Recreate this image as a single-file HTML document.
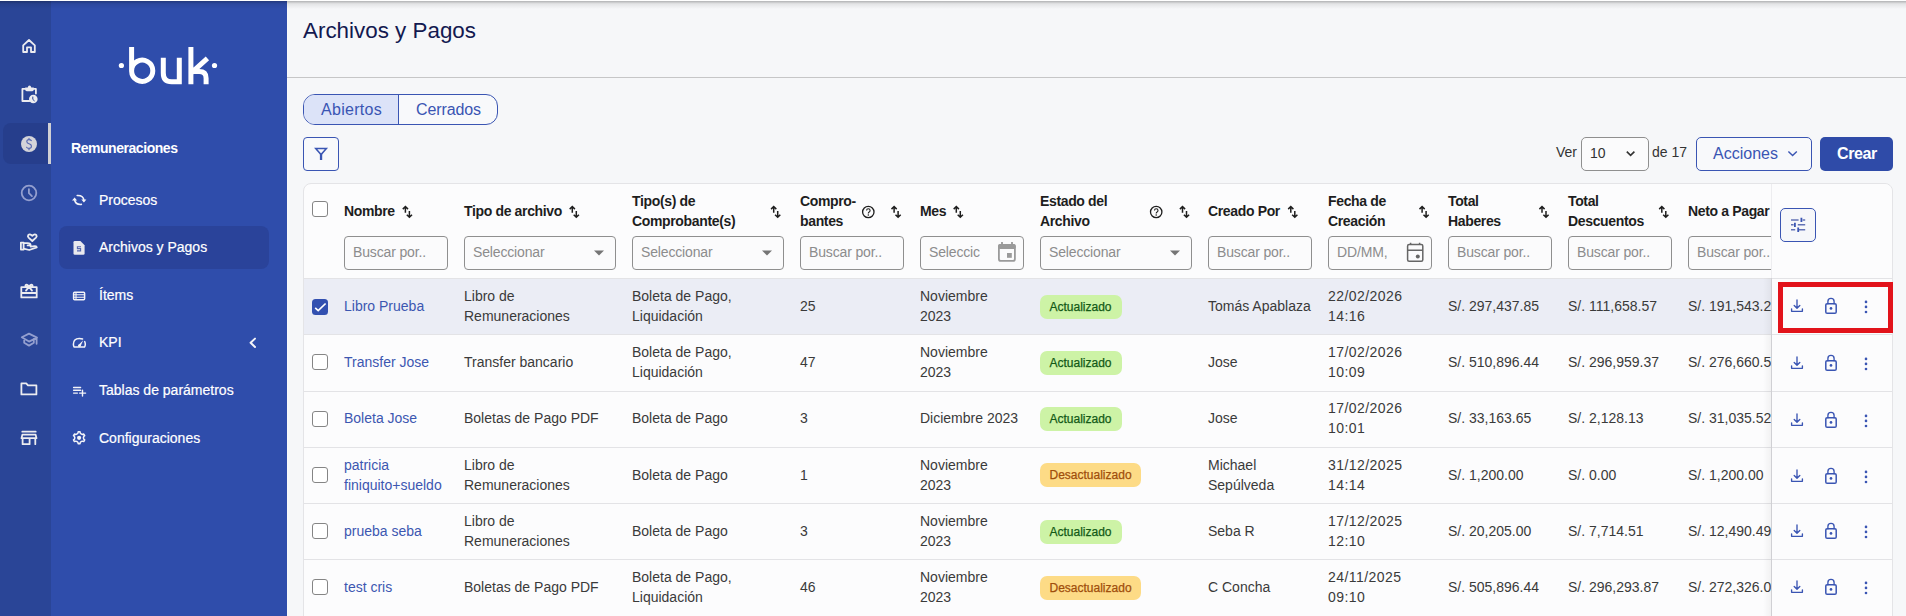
<!DOCTYPE html>
<html><head><meta charset="utf-8">
<style>
*{box-sizing:border-box;margin:0;padding:0}
html,body{width:1906px;height:616px;overflow:hidden;background:#fff;font-family:"Liberation Sans",sans-serif;}
.abs{position:absolute}
#rail{position:absolute;left:0;top:0;width:51px;height:616px;background:#2A4597}
#side{position:absolute;left:51px;top:0;width:236px;height:616px;background:#2F4DAB}
#main{position:absolute;left:287px;top:0;width:1619px;height:616px;background:#F6F7F9;border-left:1px solid #F9F9FA}
#topshadow{position:absolute;left:0;top:1px;width:1906px;height:8px;background:linear-gradient(rgba(0,0,0,.28),rgba(0,0,0,.08) 35%,rgba(0,0,0,0));pointer-events:none;z-index:50}
.ri{position:absolute;left:19px;width:20px;height:20px}
.sb-t{position:absolute;color:#fff;font-size:14px;white-space:nowrap;-webkit-text-stroke:0.2px #fff}
.sb-i{position:absolute;left:72px;width:14px;height:14px}

.mt{position:absolute;white-space:nowrap;font-size:14px;line-height:20px;color:#333}
.hd{position:absolute;white-space:nowrap;font-size:14px;line-height:20px;color:#1E1E1E;font-weight:bold;letter-spacing:-0.35px}
.inp{position:absolute;top:236px;height:34px;border:1px solid #8F8F8F;border-radius:4px;background:#FBFBFC;font-size:14px;color:#8C8C8C;line-height:30.5px;padding-left:8px;letter-spacing:-0.15px;white-space:nowrap;overflow:hidden}
.row{position:absolute;left:304px;width:1468px;height:56px;border-top:1px solid #E2E4E8}
.cell{position:absolute;font-size:14px;line-height:20px;color:#3A3A3A;white-space:nowrap}
.lnk{color:#3C57B1}
.badge{position:absolute;height:24px;border-radius:7px;font-size:12px;line-height:25px;padding:0 0 0 9.5px;white-space:nowrap;-webkit-text-stroke:0.25px currentColor}
.bg{background:#CDF3A6;color:#135A17;width:82px}
.bo{background:#FDDB86;color:#A04E0C;width:101px}
.cb{position:absolute;left:312px;width:16px;height:16px;border:1.4px solid #858585;border-radius:3px;background:#fff}
</style></head>
<body>
<div id="rail">
  <div class="abs" style="left:3px;top:123px;width:45px;height:41px;background:#263E8C;border-radius:8px 0 0 8px"></div>
  <div class="abs" style="left:48px;top:123px;width:3px;height:41px;background:#D0D0D4"></div>
</div>
<div id="side">
  <div class="abs" style="left:8px;top:226px;width:210px;height:43px;background:#2A439A;border-radius:8px"></div>
  <div class="sb-t" style="left:20px;top:138.3px;font-weight:bold;letter-spacing:-0.45px;-webkit-text-stroke:0;line-height:20px">Remuneraciones</div>
  <div class="sb-t" style="left:48px;top:190px;line-height:20px">Procesos</div>
  <div class="sb-t" style="left:48px;top:237px;line-height:20px">Archivos y Pagos</div>
  <div class="sb-t" style="left:48px;top:285.3px;line-height:20px">Ítems</div>
  <div class="sb-t" style="left:48px;top:332.3px;line-height:20px">KPI</div>
  <div class="sb-t" style="left:48px;top:380.3px;line-height:20px">Tablas de parámetros</div>
  <div class="sb-t" style="left:48px;top:428px;line-height:20px">Configuraciones</div>
</div>
<svg class="abs" id="railsvg" style="left:0;top:0" width="287" height="616" viewBox="0 0 287 616">
<g fill="none" stroke="#ECECF0" stroke-width="1.8" stroke-linejoin="round" stroke-linecap="round">
 <path d="M23.2 52 V45.3 L29 40 L34.8 45.3 V52 H31 V47.3 H27 V52 Z"/>
 <path d="M29.5 101 H22.4 V88.9 H25.2 M33.8 88.9 H35.9 V93.6"/>
</g>
<path d="M25.2 87.6 H33.8 V89.6 Q33.8 91.2 32.2 91.2 H26.8 Q25.2 91.2 25.2 89.6 Z" fill="#ECECF0"/>
<circle cx="29.5" cy="87.2" r="1.6" fill="#ECECF0"/>
<circle cx="33.3" cy="99" r="4.3" fill="#ECECF0"/>
<path d="M32.8 96.6 V99.4 L34.6 101" fill="none" stroke="#2A4597" stroke-width="1"/>
<circle cx="29" cy="144" r="8" fill="#D4D4D9"/>
<path d="M31.3 140.6 Q30.6 139.6 29 139.6 Q26.8 139.6 26.8 141.6 Q26.8 143.3 29 143.8 Q31.4 144.3 31.4 146.3 Q31.4 148.4 29 148.4 Q27.3 148.4 26.6 147.3 M29 138.2 V139.6 M29 148.4 V149.8" fill="none" stroke="#5365B0" stroke-width="1.1" stroke-linecap="round"/>
<g fill="none" stroke="#949FCF" stroke-width="1.8" stroke-linecap="round" stroke-linejoin="round">
 <circle cx="29" cy="193" r="7.3"/>
 <path d="M28.9 189.1 V193.2 L31.9 196.1"/>
 <path d="M21.8 337.2 L29 333.6 L37 337.6 L29 341.6 Z M24.2 338.8 V342.8 L29 345.6 L33.8 342.8 V338.8 M36.6 338 V343.8"/>
</g>
<g fill="none" stroke="#ECECF0" stroke-width="1.8" stroke-linecap="round" stroke-linejoin="round">
 <path d="M32.3 241 L28.6 237.6 Q27.4 236.4 28.2 235.2 Q29.6 233.6 31.3 235 L32.3 235.9 L33.3 235 Q35 233.6 36.4 235.2 Q37.2 236.4 36 237.6 Z"/>
 <path d="M20.9 242.6 H23.6 V249.6 H20.9 Z M23.6 243.2 H27.6 Q30.6 243.2 30.6 245.4 H27.6 M23.6 248.6 L29.2 250 L36.8 247.4 Q36.6 246 34.6 246.2 L30.6 246.6"/>
 <path d="M21.3 287.2 H36.7 V297.4 H21.3 Z M21.3 293 H36.7 M26 290.6 L29 286.6 L32 290.6 M29 286.6 Q27 283.6 25.6 285.2 Q24.6 286.6 29 286.6 Q33.4 286.6 32.4 285.2 Q31 283.6 29 286.6"/>
 <path d="M21.4 383.4 H26.2 L28 385.4 H36.4 V394.4 H21.4 Z"/>
 <path d="M22.3 431.7 H35.7 M22.4 434.6 H35.6 L36.5 438.2 H21.5 Z M22.6 438.2 V444.2 H29.6 V438.2 M35.3 438.2 V444.2"/>
</g>
</svg>
<svg class="abs" style="left:0;top:0" width="287" height="616" viewBox="0 0 287 616">
<g fill="none" stroke="#F4F4F8" stroke-width="1.6" stroke-linecap="round">
 <path d="M77.2 195.5 Q83.4 195.2 83.9 200.4 M81.4 204.4 Q75.2 204.8 74.6 199.6"/>
</g>
<path d="M81.3 199.4 L86.4 199.4 L83.9 202.6 Z M72 200.6 L77.1 200.6 L74.6 197.4 Z" fill="#F4F4F8"/>
<path d="M73.5 242.3 Q73.5 241 74.8 241 H80.4 L84.6 245.2 V253.4 Q84.6 254.8 83.3 254.8 H74.8 Q73.5 254.8 73.5 253.4 Z" fill="#E9E9EE"/>
<path d="M81 246.7 H77.4 V248.6 H80.6 V250.9 H77" fill="none" stroke="#5567B0" stroke-width="1.1"/>
<g fill="none" stroke="#F4F4F8" stroke-width="1.5">
 <rect x="73.6" y="292.3" width="11" height="7.4" rx="1"/>
 <path d="M73.6 294.8 H84.6 M73.6 297.3 H84.6 M76 292.3 V299.7" stroke-width="1.1"/>
</g>
<g fill="none" stroke="#F4F4F8" stroke-width="1.5" stroke-linecap="round" stroke-linejoin="round">
 <path d="M82.6 339 Q81.1 338.4 79.3 338.4 Q73.4 338.4 73.4 344.2 Q73.4 345.9 74.2 347.1 H84.5 Q85.3 345.9 85.3 344.2 Q85.3 342.7 84.7 341.6"/>
</g>
<path d="M78.2 345.2 L83.2 340.2 L80.4 346.6 Z" fill="#F4F4F8"/><circle cx="79.3" cy="345.8" r="1.3" fill="#F4F4F8"/>
<g fill="none" stroke="#F4F4F8" stroke-width="1.6" stroke-linecap="round">
 <path d="M73.6 387.5 H80.6 M73.6 390.3 H80.6 M73.6 393.1 H77.4 M79.6 393.1 H85.6 M82.5 390.1 V396.1" stroke-width="1.4"/>
</g>
<path d="M76.95 434.08 L78.00 433.03 L78.16 431.87 L80.04 431.87 L80.20 433.03 L81.25 434.08 L82.68 434.46 L83.76 434.02 L84.70 435.65 L83.79 436.37 L83.40 437.80 L83.79 439.23 L84.70 439.95 L83.76 441.58 L82.68 441.14 L81.25 441.52 L80.20 442.57 L80.04 443.73 L78.16 443.73 L78.00 442.57 L76.95 441.52 L75.52 441.14 L74.44 441.58 L73.50 439.95 L74.41 439.23 L74.80 437.80 L74.41 436.37 L73.50 435.65 L74.44 434.02 L75.52 434.46 Z" fill="none" stroke="#F4F4F8" stroke-width="1.5" stroke-linejoin="round"/><circle cx="79.1" cy="437.8" r="2.1" fill="#F4F4F8"/>
<path d="M255 338.6 L250.6 342.8 L255 347" fill="none" stroke="#F4F4F8" stroke-width="2" stroke-linecap="round" stroke-linejoin="round"/>
<g fill="none" stroke="#FFFFFF" stroke-width="5" stroke-linecap="butt">
 <path d="M131.6 47 V71 A10.6 10.6 0 1 0 131.6 70.6"/>
 <path d="M163.3 57.8 V73 Q163.3 81.8 171.6 81.8 H179.3 M179.3 57.8 V84.3"/>
 <path d="M190.9 47 V84.3 M207.4 58.4 L191.6 72.6"/><path d="M191 71.6 H199.2 Q206.1 71.6 206.1 78.2 V84.3"/>
</g>
<circle cx="121.4" cy="65.5" r="2.6" fill="#fff"/>
<circle cx="214.5" cy="65.5" r="2.6" fill="#fff"/>
</svg>
<div id="main"></div>

<div class="abs" style="left:303px;top:18px;font-size:22.4px;line-height:26px;color:#131950;white-space:nowrap">Archivos y Pagos</div>
<div class="abs" style="left:287px;top:77px;width:1619px;height:1px;background:#C6C6C7"></div>
<div class="abs" style="left:303px;top:94px;width:195px;height:31px;border:1px solid #3A55B3;border-radius:12px;background:#F8F9FB">
  <div class="abs" style="left:0;top:0;width:95px;height:29px;background:#DCE3F8;border-right:1px solid #3A55B3;border-radius:11px 0 0 11px"></div>
  <div class="abs" style="left:17px;top:4.6px;font-size:16px;line-height:20px;color:#3A55B3;letter-spacing:0.3px">Abiertos</div>
  <div class="abs" style="left:112px;top:4.6px;font-size:16px;line-height:20px;color:#3A55B3;letter-spacing:-0.1px">Cerrados</div>
</div>
<div class="abs" style="left:303px;top:137px;width:36px;height:34px;border:1px solid #3A55B3;border-radius:4px;background:#F8F9FB"></div>
<svg class="abs" style="left:303px;top:137px" width="36" height="34"><path d="M12.7 11.6 H23.4 L18.05 17.6 Z" fill="none" stroke="#3A55B3" stroke-width="1.5" stroke-linejoin="miter"/><rect x="16.9" y="16.8" width="2.3" height="6.2" fill="#3A55B3"/></svg>

<div class="mt" style="left:1556px;top:142px">Ver</div>
<div class="abs" style="left:1581px;top:137px;width:68px;height:34px;border:1px solid #8F8F8F;border-radius:5px;background:#FBFBFC"></div>
<div class="mt" style="left:1590px;top:143px;color:#333">10</div>
<svg class="abs" style="left:1581px;top:137px" width="68" height="34"><path d="M45.8 14.6 L49.6 18.4 L53.4 14.6" fill="none" stroke="#333" stroke-width="1.6"/></svg>
<div class="mt" style="left:1652px;top:142px">de 17</div>
<div class="abs" style="left:1696px;top:137px;width:116px;height:34px;border:1px solid #3A55B3;border-radius:5px;background:#F8F9FB"></div>
<div class="abs" style="left:1713px;top:144px;font-size:16px;line-height:20px;color:#3A55B3;white-space:nowrap">Acciones</div>
<svg class="abs" style="left:1696px;top:137px" width="116" height="34"><path d="M92.4 14.4 L96.6 18.6 L100.8 14.4" fill="none" stroke="#3A55B3" stroke-width="1.4"/></svg>
<div class="abs" style="left:1820px;top:137px;width:73px;height:34px;border-radius:5px;background:#2F4BA8"></div>
<div class="abs" style="left:1837px;top:144px;font-size:16px;line-height:20px;color:#fff;font-weight:bold;letter-spacing:-0.4px;white-space:nowrap">Crear</div>

<!--TABLE-->
<div class="abs" style="left:303px;top:183px;width:1590px;height:460px;background:#FCFCFD;border:1px solid #E4E4E7;border-radius:8px"></div>
<div class="abs" style="left:304px;top:184px;width:1468px;height:94px;overflow:hidden">
<div class="hd" style="left:40px;top:17px">Nombre</div>
<div class="hd" style="left:160px;top:17px">Tipo de archivo</div>
<div class="hd" style="left:328px;top:7px">Tipo(s) de<br>Comprobante(s)</div>
<div class="hd" style="left:496px;top:7px">Compro-<br>bantes</div>
<div class="hd" style="left:616px;top:17px">Mes</div>
<div class="hd" style="left:736px;top:7px">Estado del<br>Archivo</div>
<div class="hd" style="left:904px;top:17px">Creado Por</div>
<div class="hd" style="left:1024px;top:7px">Fecha de<br>Creación</div>
<div class="hd" style="left:1144px;top:7px">Total<br>Haberes</div>
<div class="hd" style="left:1264px;top:7px">Total<br>Descuentos</div>
<div class="hd" style="left:1384px;top:17px">Neto a Pagar</div>
<div class="cb" style="top:17px;left:8px"></div>
<div class="inp" style="left:40px;top:52px;width:104px">Buscar por..</div>
<div class="inp" style="left:160px;top:52px;width:152px">Seleccionar</div>
<div class="inp" style="left:328px;top:52px;width:152px">Seleccionar</div>
<div class="inp" style="left:496px;top:52px;width:104px">Buscar por..</div>
<div class="inp" style="left:616px;top:52px;width:104px">Seleccic</div>
<div class="inp" style="left:736px;top:52px;width:152px">Seleccionar</div>
<div class="inp" style="left:904px;top:52px;width:104px">Buscar por..</div>
<div class="inp" style="left:1024px;top:52px;width:104px">DD/MM,</div>
<div class="inp" style="left:1144px;top:52px;width:104px">Buscar por..</div>
<div class="inp" style="left:1264px;top:52px;width:104px">Buscar por..</div>
<div class="inp" style="left:1384px;top:52px;width:104px">Buscar por..</div>
</div>
<div class="abs" style="left:304px;top:278px;width:1468px;height:338px;overflow:hidden">
<div class="abs" style="left:0;top:0px;width:1468px;height:56px;background:#EBEDF5;border-top:1px solid #E3E3E6"></div>
<div class="abs" style="left:8px;top:21.0px;width:16px;height:16px;border-radius:3.5px;background:#3250B0"></div>
<svg class="abs" style="left:8px;top:21.0px" width="16" height="16"><path d="M3.2 8.9 L6.2 11.6 L13.6 4.5" fill="none" stroke="#fff" stroke-width="1.7"/></svg>
<div class="cell lnk" style="left:40px;top:18px;">Libro Prueba</div>
<div class="cell" style="left:160px;top:8px;">Libro de<br>Remuneraciones</div>
<div class="cell" style="left:328px;top:8px;">Boleta de Pago,<br>Liquidación</div>
<div class="cell" style="left:496px;top:18px;">25</div>
<div class="cell" style="left:616px;top:8px;">Noviembre<br>2023</div>
<div class="badge bg" style="left:736px;top:17px">Actualizado</div>
<div class="cell" style="left:904px;top:18px;">Tomás Apablaza</div>
<div class="cell" style="left:1024px;top:8px;letter-spacing:0.45px;">22/02/2026<br>14:16</div>
<div class="cell" style="left:1144px;top:18px;">S/. 297,437.85</div>
<div class="cell" style="left:1264px;top:18px;">S/. 111,658.57</div>
<div class="cell" style="left:1384px;top:18px;">S/. 191,543.27</div>
<div class="abs" style="left:0;top:56px;width:1468px;height:57px;background:transparent;border-top:1px solid #E3E3E6"></div>
<div class="cb" style="left:8px;top:76.0px"></div>
<div class="cell lnk" style="left:40px;top:74px;">Transfer Jose</div>
<div class="cell" style="left:160px;top:74px;">Transfer bancario</div>
<div class="cell" style="left:328px;top:64px;">Boleta de Pago,<br>Liquidación</div>
<div class="cell" style="left:496px;top:74px;">47</div>
<div class="cell" style="left:616px;top:64px;">Noviembre<br>2023</div>
<div class="badge bg" style="left:736px;top:73px">Actualizado</div>
<div class="cell" style="left:904px;top:74px;">Jose</div>
<div class="cell" style="left:1024px;top:64px;letter-spacing:0.45px;">17/02/2026<br>10:09</div>
<div class="cell" style="left:1144px;top:74px;">S/. 510,896.44</div>
<div class="cell" style="left:1264px;top:74px;">S/. 296,959.37</div>
<div class="cell" style="left:1384px;top:74px;">S/. 276,660.57</div>
<div class="abs" style="left:0;top:113px;width:1468px;height:56px;background:transparent;border-top:1px solid #E3E3E6"></div>
<div class="cb" style="left:8px;top:132.5px"></div>
<div class="cell lnk" style="left:40px;top:130px;">Boleta Jose</div>
<div class="cell" style="left:160px;top:130px;">Boletas de Pago PDF</div>
<div class="cell" style="left:328px;top:130px;">Boleta de Pago</div>
<div class="cell" style="left:496px;top:130px;">3</div>
<div class="cell" style="left:616px;top:130px;">Diciembre 2023</div>
<div class="badge bg" style="left:736px;top:129px">Actualizado</div>
<div class="cell" style="left:904px;top:130px;">Jose</div>
<div class="cell" style="left:1024px;top:120px;letter-spacing:0.45px;">17/02/2026<br>10:01</div>
<div class="cell" style="left:1144px;top:130px;">S/. 33,163.65</div>
<div class="cell" style="left:1264px;top:130px;">S/. 2,128.13</div>
<div class="cell" style="left:1384px;top:130px;">S/. 31,035.52</div>
<div class="abs" style="left:0;top:169px;width:1468px;height:56px;background:transparent;border-top:1px solid #E3E3E6"></div>
<div class="cb" style="left:8px;top:189.0px"></div>
<div class="cell lnk" style="left:40px;top:177px;">patricia<br>finiquito+sueldo</div>
<div class="cell" style="left:160px;top:177px;">Libro de<br>Remuneraciones</div>
<div class="cell" style="left:328px;top:187px;">Boleta de Pago</div>
<div class="cell" style="left:496px;top:187px;">1</div>
<div class="cell" style="left:616px;top:177px;">Noviembre<br>2023</div>
<div class="badge bo" style="left:736px;top:185px">Desactualizado</div>
<div class="cell" style="left:904px;top:177px;">Michael<br>Sepúlveda</div>
<div class="cell" style="left:1024px;top:177px;letter-spacing:0.45px;">31/12/2025<br>14:14</div>
<div class="cell" style="left:1144px;top:187px;">S/. 1,200.00</div>
<div class="cell" style="left:1264px;top:187px;">S/. 0.00</div>
<div class="cell" style="left:1384px;top:187px;">S/. 1,200.00</div>
<div class="abs" style="left:0;top:225px;width:1468px;height:56px;background:transparent;border-top:1px solid #E3E3E6"></div>
<div class="cb" style="left:8px;top:245.0px"></div>
<div class="cell lnk" style="left:40px;top:243px;">prueba seba</div>
<div class="cell" style="left:160px;top:233px;">Libro de<br>Remuneraciones</div>
<div class="cell" style="left:328px;top:243px;">Boleta de Pago</div>
<div class="cell" style="left:496px;top:243px;">3</div>
<div class="cell" style="left:616px;top:233px;">Noviembre<br>2023</div>
<div class="badge bg" style="left:736px;top:242px">Actualizado</div>
<div class="cell" style="left:904px;top:243px;">Seba R</div>
<div class="cell" style="left:1024px;top:233px;letter-spacing:0.45px;">17/12/2025<br>12:10</div>
<div class="cell" style="left:1144px;top:243px;">S/. 20,205.00</div>
<div class="cell" style="left:1264px;top:243px;">S/. 7,714.51</div>
<div class="cell" style="left:1384px;top:243px;">S/. 12,490.49</div>
<div class="abs" style="left:0;top:281px;width:1468px;height:56px;background:transparent;border-top:1px solid #E3E3E6"></div>
<div class="cb" style="left:8px;top:301.0px"></div>
<div class="cell lnk" style="left:40px;top:299px;">test cris</div>
<div class="cell" style="left:160px;top:299px;">Boletas de Pago PDF</div>
<div class="cell" style="left:328px;top:289px;">Boleta de Pago,<br>Liquidación</div>
<div class="cell" style="left:496px;top:299px;">46</div>
<div class="cell" style="left:616px;top:289px;">Noviembre<br>2023</div>
<div class="badge bo" style="left:736px;top:298px">Desactualizado</div>
<div class="cell" style="left:904px;top:299px;">C Concha</div>
<div class="cell" style="left:1024px;top:289px;letter-spacing:0.45px;">24/11/2025<br>09:10</div>
<div class="cell" style="left:1144px;top:299px;">S/. 505,896.44</div>
<div class="cell" style="left:1264px;top:299px;">S/. 296,293.87</div>
<div class="cell" style="left:1384px;top:299px;">S/. 272,326.07</div>
</div>
<div class="abs" style="left:1771px;top:184px;width:121px;height:432px;background:#FCFCFD;border-left:1px solid #EDEDF0;border-top-right-radius:8px"></div>
<div class="abs" style="left:1771px;top:278px;width:1px;height:338px;background:#D0D0D4"></div>
<div class="abs" style="left:1763px;top:278px;width:8px;height:338px;background:linear-gradient(90deg,rgba(0,0,0,0),rgba(0,0,0,.045))"></div>
<div class="abs" style="left:1772px;top:278px;width:120px;height:1px;background:#E3E3E6"></div>
<div class="abs" style="left:1772px;top:334px;width:120px;height:1px;background:#E3E3E6"></div>
<div class="abs" style="left:1772px;top:391px;width:120px;height:1px;background:#E3E3E6"></div>
<div class="abs" style="left:1772px;top:447px;width:120px;height:1px;background:#E3E3E6"></div>
<div class="abs" style="left:1772px;top:503px;width:120px;height:1px;background:#E3E3E6"></div>
<div class="abs" style="left:1772px;top:559px;width:120px;height:1px;background:#E3E3E6"></div>
<div class="abs" style="left:1780px;top:208px;width:36px;height:34px;border:1px solid #3A55B3;border-radius:5px;background:#F6F7FA"></div>
<svg class="abs" style="left:0;top:0;z-index:5" width="1906" height="616">
<path d="M405.40000000000003 212.8 V206.6 M402.8 209.1 L405.40000000000003 206.5 L408.0 209.1 M409.40000000000003 211.0 V217.2 M406.8 214.7 L409.40000000000003 217.3 L412.0 214.7" fill="none" stroke="#1E1E1E" stroke-width="1.5"/>
<path d="M572.3000000000001 212.8 V206.6 M569.7 209.1 L572.3000000000001 206.5 L574.9000000000001 209.1 M576.3000000000001 211.0 V217.2 M573.7 214.7 L576.3000000000001 217.3 L578.9000000000001 214.7" fill="none" stroke="#1E1E1E" stroke-width="1.5"/>
<path d="M773.7 212.8 V206.6 M771.1 209.1 L773.7 206.5 L776.3000000000001 209.1 M777.7 211.0 V217.2 M775.1 214.7 L777.7 217.3 L780.3000000000001 214.7" fill="none" stroke="#1E1E1E" stroke-width="1.5"/>
<path d="M894.1 212.8 V206.6 M891.5 209.1 L894.1 206.5 L896.7 209.1 M898.1 211.0 V217.2 M895.5 214.7 L898.1 217.3 L900.7 214.7" fill="none" stroke="#1E1E1E" stroke-width="1.5"/>
<circle cx="868.3" cy="212" r="5.7" fill="none" stroke="#1E1E1E" stroke-width="1.3"/><path d="M866.5999999999999 210.6 Q866.5999999999999 208.8 868.3 208.8 Q870.0999999999999 208.8 870.0999999999999 210.5 Q870.0999999999999 211.6 868.9 212.3 Q868.3 212.7 868.3 213.4" fill="none" stroke="#1E1E1E" stroke-width="1.1"/><circle cx="868.3" cy="215" r="0.75" fill="#1E1E1E"/>
<path d="M956.3000000000001 212.8 V206.6 M953.7 209.1 L956.3000000000001 206.5 L958.9000000000001 209.1 M960.3000000000001 211.0 V217.2 M957.7 214.7 L960.3000000000001 217.3 L962.9000000000001 214.7" fill="none" stroke="#1E1E1E" stroke-width="1.5"/>
<path d="M1182.5 212.8 V206.6 M1179.9 209.1 L1182.5 206.5 L1185.1000000000001 209.1 M1186.5 211.0 V217.2 M1183.9 214.7 L1186.5 217.3 L1189.1000000000001 214.7" fill="none" stroke="#1E1E1E" stroke-width="1.5"/>
<circle cx="1156.2" cy="212" r="5.7" fill="none" stroke="#1E1E1E" stroke-width="1.3"/><path d="M1154.5 210.6 Q1154.5 208.8 1156.2 208.8 Q1158.0 208.8 1158.0 210.5 Q1158.0 211.6 1156.8 212.3 Q1156.2 212.7 1156.2 213.4" fill="none" stroke="#1E1E1E" stroke-width="1.1"/><circle cx="1156.2" cy="215" r="0.75" fill="#1E1E1E"/>
<path d="M1290.8 212.8 V206.6 M1288.2 209.1 L1290.8 206.5 L1293.4 209.1 M1294.8 211.0 V217.2 M1292.2 214.7 L1294.8 217.3 L1297.4 214.7" fill="none" stroke="#1E1E1E" stroke-width="1.5"/>
<path d="M1422.1 212.8 V206.6 M1419.5 209.1 L1422.1 206.5 L1424.7 209.1 M1426.1 211.0 V217.2 M1423.5 214.7 L1426.1 217.3 L1428.7 214.7" fill="none" stroke="#1E1E1E" stroke-width="1.5"/>
<path d="M1542.0 212.8 V206.6 M1539.4 209.1 L1542.0 206.5 L1544.6000000000001 209.1 M1546.0 211.0 V217.2 M1543.4 214.7 L1546.0 217.3 L1548.6000000000001 214.7" fill="none" stroke="#1E1E1E" stroke-width="1.5"/>
<path d="M1661.8 212.8 V206.6 M1659.2 209.1 L1661.8 206.5 L1664.4 209.1 M1665.8 211.0 V217.2 M1663.2 214.7 L1665.8 217.3 L1668.4 214.7" fill="none" stroke="#1E1E1E" stroke-width="1.5"/>
<path d="M594 250.5 H604 L599 255.5 Z" fill="#757575"/>
<path d="M762 250.5 H772 L767 255.5 Z" fill="#757575"/>
<rect x="998.9" y="244.9" width="16" height="16" rx="2" fill="none" stroke="#9A9A9A" stroke-width="1.8"/><rect x="998" y="244" width="17.8" height="5" rx="2" fill="#9A9A9A"/><path d="M1002 242 V245 M1012 242 V245" stroke="#9A9A9A" stroke-width="1.8"/><rect x="1007" y="253" width="4.8" height="4.8" fill="#9A9A9A"/>
<path d="M1170 250.5 H1180 L1175 255.5 Z" fill="#757575"/>
<rect x="1407.6" y="244.6" width="15.2" height="16.6" rx="1.5" fill="none" stroke="#666" stroke-width="1.5"/><path d="M1407.6 250.3 H1422.8 M1410.6 242.8 V245 M1419.6 242.8 V245" stroke="#666" stroke-width="1.5"/><circle cx="1417.8" cy="256.5" r="2" fill="#666"/>
</svg>
<svg class="abs" style="left:0;top:0;z-index:6" width="1906" height="616">
<g stroke="#6373B5" stroke-width="1.5"><path d="M1791 220 H1798.6 M1802.6 220 H1805.2 M1791 224.8 H1793.6 M1797.8 224.8 H1805.2 M1791 229.8 H1795.2 M1799 229.8 H1805.2"/></g><g stroke="#3A55B3" stroke-width="1.8"><path d="M1801.4 217.8 V222 M1794.9 222.7 V227 M1798.2 227.6 V232"/></g>
<g fill="none" stroke="#3A55B3" stroke-width="1.35" stroke-linecap="round" stroke-linejoin="round"><path d="M1797 300 V307.6 M1794.2 305.4 L1797 308.2 L1799.8 305.4 M1791.6 308.8 V311.3 H1802.4 V308.8"/><rect x="1825.8" y="303.7" width="10.4" height="9.6" rx="1.3" stroke-width="1.5"/><path d="M1827.9 303.7 V301.4 Q1827.9 298.4 1831 298.4 Q1834.1 298.4 1834.1 301.4 V303.7"/></g><circle cx="1831" cy="308.4" r="1.35" fill="#3A55B3"/><circle cx="1866" cy="301.9" r="1.3" fill="#3A55B3"/><circle cx="1866" cy="306.9" r="1.3" fill="#3A55B3"/><circle cx="1866" cy="312" r="1.3" fill="#3A55B3"/>
<g fill="none" stroke="#3A55B3" stroke-width="1.35" stroke-linecap="round" stroke-linejoin="round"><path d="M1797 357 V364.6 M1794.2 362.4 L1797 365.2 L1799.8 362.4 M1791.6 365.8 V368.3 H1802.4 V365.8"/><rect x="1825.8" y="360.7" width="10.4" height="9.6" rx="1.3" stroke-width="1.5"/><path d="M1827.9 360.7 V358.4 Q1827.9 355.4 1831 355.4 Q1834.1 355.4 1834.1 358.4 V360.7"/></g><circle cx="1831" cy="365.4" r="1.35" fill="#3A55B3"/><circle cx="1866" cy="358.9" r="1.3" fill="#3A55B3"/><circle cx="1866" cy="363.9" r="1.3" fill="#3A55B3"/><circle cx="1866" cy="369" r="1.3" fill="#3A55B3"/>
<g fill="none" stroke="#3A55B3" stroke-width="1.35" stroke-linecap="round" stroke-linejoin="round"><path d="M1797 414 V421.6 M1794.2 419.4 L1797 422.2 L1799.8 419.4 M1791.6 422.8 V425.3 H1802.4 V422.8"/><rect x="1825.8" y="417.7" width="10.4" height="9.6" rx="1.3" stroke-width="1.5"/><path d="M1827.9 417.7 V415.4 Q1827.9 412.4 1831 412.4 Q1834.1 412.4 1834.1 415.4 V417.7"/></g><circle cx="1831" cy="422.4" r="1.35" fill="#3A55B3"/><circle cx="1866" cy="415.9" r="1.3" fill="#3A55B3"/><circle cx="1866" cy="420.9" r="1.3" fill="#3A55B3"/><circle cx="1866" cy="426" r="1.3" fill="#3A55B3"/>
<g fill="none" stroke="#3A55B3" stroke-width="1.35" stroke-linecap="round" stroke-linejoin="round"><path d="M1797 470 V477.6 M1794.2 475.4 L1797 478.2 L1799.8 475.4 M1791.6 478.8 V481.3 H1802.4 V478.8"/><rect x="1825.8" y="473.7" width="10.4" height="9.6" rx="1.3" stroke-width="1.5"/><path d="M1827.9 473.7 V471.4 Q1827.9 468.4 1831 468.4 Q1834.1 468.4 1834.1 471.4 V473.7"/></g><circle cx="1831" cy="478.4" r="1.35" fill="#3A55B3"/><circle cx="1866" cy="471.9" r="1.3" fill="#3A55B3"/><circle cx="1866" cy="476.9" r="1.3" fill="#3A55B3"/><circle cx="1866" cy="482" r="1.3" fill="#3A55B3"/>
<g fill="none" stroke="#3A55B3" stroke-width="1.35" stroke-linecap="round" stroke-linejoin="round"><path d="M1797 525 V532.6 M1794.2 530.4 L1797 533.2 L1799.8 530.4 M1791.6 533.8 V536.3 H1802.4 V533.8"/><rect x="1825.8" y="528.7" width="10.4" height="9.6" rx="1.3" stroke-width="1.5"/><path d="M1827.9 528.7 V526.4 Q1827.9 523.4 1831 523.4 Q1834.1 523.4 1834.1 526.4 V528.7"/></g><circle cx="1831" cy="533.4" r="1.35" fill="#3A55B3"/><circle cx="1866" cy="526.9" r="1.3" fill="#3A55B3"/><circle cx="1866" cy="531.9" r="1.3" fill="#3A55B3"/><circle cx="1866" cy="537" r="1.3" fill="#3A55B3"/>
<g fill="none" stroke="#3A55B3" stroke-width="1.35" stroke-linecap="round" stroke-linejoin="round"><path d="M1797 581 V588.6 M1794.2 586.4 L1797 589.2 L1799.8 586.4 M1791.6 589.8 V592.3 H1802.4 V589.8"/><rect x="1825.8" y="584.7" width="10.4" height="9.6" rx="1.3" stroke-width="1.5"/><path d="M1827.9 584.7 V582.4 Q1827.9 579.4 1831 579.4 Q1834.1 579.4 1834.1 582.4 V584.7"/></g><circle cx="1831" cy="589.4" r="1.35" fill="#3A55B3"/><circle cx="1866" cy="582.9" r="1.3" fill="#3A55B3"/><circle cx="1866" cy="587.9" r="1.3" fill="#3A55B3"/><circle cx="1866" cy="593" r="1.3" fill="#3A55B3"/>
</svg>
<div class="abs" style="left:1778px;top:282px;width:115px;height:51px;border:5px solid #E2131B;z-index:10"></div>
<!--/TABLE-->
<div id="topshadow"></div>
<div class="abs" style="left:0;top:0;width:1906px;height:1px;background:#fff;z-index:60"></div>
</body></html>
